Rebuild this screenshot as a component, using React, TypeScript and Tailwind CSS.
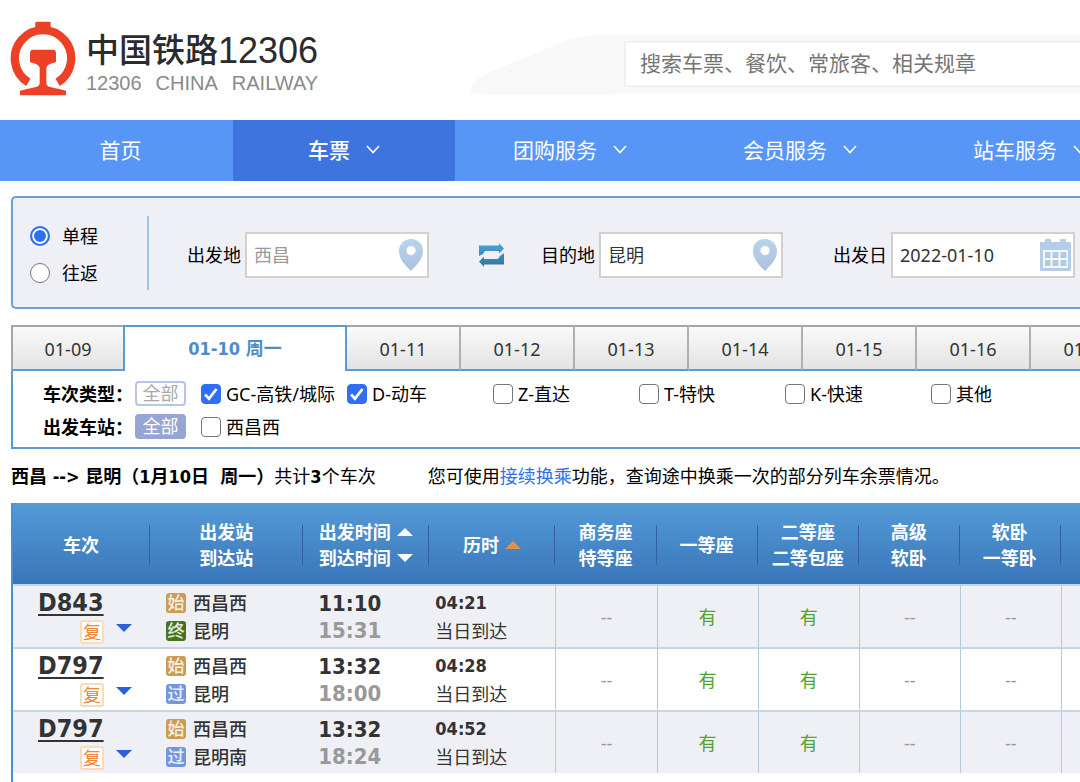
import { useState } from 'react';

const navItems = ['团购服务', '会员服务', '站车服务'];
const dates = ['01-11', '01-12', '01-13', '01-14', '01-15', '01-16', '01-17'];
const trainTypes = [
  { label: 'GC-高铁/城际', checked: true },
  { label: 'D-动车', checked: true },
  { label: 'Z-直达', checked: false },
  { label: 'T-特快', checked: false },
  { label: 'K-快速', checked: false },
  { label: '其他', checked: false },
];
const trains = [
  { no: 'D843', from: '西昌西', to: '昆明', endKind: '终', depart: '11:10', arrive: '15:31', duration: '04:21' },
  { no: 'D797', from: '西昌西', to: '昆明', endKind: '过', depart: '13:32', arrive: '18:00', duration: '04:28' },
  { no: 'D797', from: '西昌西', to: '昆明南', endKind: '过', depart: '13:32', arrive: '18:24', duration: '04:52' },
];
const seats = ['--', '有', '有', '--', '--', ''];
const seatHeads = [['商务座', '特等座'], ['一等座'], ['二等座', '二等包座'], ['高级', '软卧'], ['软卧', '一等卧'], []];

function Logo() {
  return (
    <svg viewBox="30 62 198 225" className="h-[75px] w-[66px] shrink-0" aria-hidden="true">
      <path d="M85 246A84.5 84.5 0 1 1 173 246" fill="none" stroke="#ec4126" strokeWidth="25" />
      <path d="M106 84V68q0-4 4-4h38q4 0 4 4v16z" fill="#ec4126" />
      <path
        d="M90 158q0-10 10-10h58q10 0 10 10v26q-1 2-6 3-23 5-23 17v44q0 9 12 12 10 3 24 5l23 6v14H60v-14l23-6q14-2 24-5 12-3 12-12v-44q0-12-23-17-5-1-6-3z"
        fill="#ec4126"
      />
    </svg>
  );
}

function Chevron() {
  return (
    <svg viewBox="0 0 14 9" className="h-[9px] w-[14px]" aria-hidden="true">
      <path d="M1 1l6 6.5L13 1" fill="none" stroke="#fff" strokeWidth="1.6" />
    </svg>
  );
}

function Pin() {
  return (
    <svg viewBox="0 0 24 32" className="mr-0.5 h-8 w-6 shrink-0" aria-hidden="true">
      <defs>
        <linearGradient id="pin" x1="0" y1="0" x2="0" y2="1">
          <stop offset="0" stopColor="#b9d4ec" />
          <stop offset="1" stopColor="#abc1dc" />
        </linearGradient>
      </defs>
      <path
        fill="url(#pin)"
        fillRule="evenodd"
        d="M12 0C5 0 0 5 0 12c0 8 6 14 12 20 6-6 12-12 12-20C24 5 19 0 12 0zm0 7a4.6 4.6 0 1 1 0 9.200a4.600 4.600 0 0 1 0-9.200z"
      />
    </svg>
  );
}

function CalendarIcon() {
  return (
    <svg viewBox="0 0 31 32" className="h-8 w-[31px] shrink-0" aria-hidden="true">
      <path fill="#b4cee8" d="M0 3h5V1q0-1 1-1h4q1 0 1 1v2h9V1q0-1 1-1h4q1 0 1 1v2h5v28q0 1-1 1H1q-1 0-1-1z" />
      <path fill="#f4f8fc" d="M3 11h25v18H3z" />
      <path
        fill="#b4cae2"
        d="M5 13h5.500v6H5zM12.500 13h6v6h-6zM20.500 13h6v6h-6zM5 21h5.500v6H5zM12.500 21h6v6h-6zM20.500 21h6v6h-6z"
      />
    </svg>
  );
}

function SwapIcon() {
  return (
    <svg viewBox="0 0 25 24" className="h-6 w-[25px]" aria-hidden="true">
      <defs>
        <linearGradient id="swap" x1="0" y1="0" x2="0" y2="1">
          <stop offset="0" stopColor="#4aa5d3" />
          <stop offset="1" stopColor="#33739f" />
        </linearGradient>
      </defs>
      <path
        fill="url(#swap)"
        d="M0 13V2.500h20V0l5 5.500-5 5V8H6L4 11zM25 10v11.500H5V24l-5-5.500 5-5V16h14l2-3z"
      />
    </svg>
  );
}

function Triangle({ down, className }: { down?: boolean; className: string }) {
  return (
    <svg viewBox="0 0 16 8" className={`h-2 w-4 ${className}`} aria-hidden="true">
      <path d={down ? 'M0 0h16L8 8z' : 'M0 8h16L8 0z'} fill="currentColor" />
    </svg>
  );
}

function CheckBox({ label, initial }: { label: string; initial?: boolean }) {
  const [on, setOn] = useState(!!initial);
  return (
    <label className="flex items-center gap-[5px] whitespace-nowrap">
      <span className="grid">
        <input
          type="checkbox"
          checked={on}
          onChange={() => setOn(!on)}
          className="col-start-1 row-start-1 size-5 appearance-none rounded-[4px] border border-[#767676] bg-white checked:border-[#2f6ff5] checked:bg-[#2f6ff5]"
        />
        {on && (
          <svg viewBox="0 0 20 20" className="pointer-events-none col-start-1 row-start-1 size-5" aria-hidden="true">
            <path d="M4 10.500l4 4.200L15.500 5" fill="none" stroke="#fff" strokeWidth="2.700" />
          </svg>
        )}
      </span>
      {label}
    </label>
  );
}

function Field({ id, label, value, muted, icon }: { id: string; label: string; value: string; muted?: boolean; icon: React.ReactNode }) {
  return (
    <div className="flex shrink-0 items-center gap-1">
      <label htmlFor={id}>{label}</label>
      <div className="flex h-[46px] w-[184px] items-center border-2 border-[#d2d0cd] bg-white pr-0.5">
        <input
          id={id}
          defaultValue={value}
          className={`min-w-0 flex-1 bg-transparent pl-[7px] outline-none ${muted ? 'text-[#999]' : 'text-[#333]'}`}
        />
        {icon}
      </div>
    </div>
  );
}

function KindBadge({ kind }: { kind: string }) {
  const color = kind === '始' ? 'bg-[#cb9c52]' : kind === '终' ? 'bg-[#48731d]' : 'bg-[#7496dc]';
  return (
    <span className={`flex size-5 items-center justify-center rounded-[3px] text-[17px] font-medium leading-5 text-white/85 ${color}`}>
      {kind}
    </span>
  );
}

const bold = "font-bold font-['DejaVu_Sans_Condensed','Noto_Sans','Noto_Sans_CJK_SC',sans-serif]";

export default function App() {
  const [trip, setTrip] = useState('single');
  return (
    <div className="min-h-screen overflow-hidden bg-white font-['Noto_Sans','Noto_Sans_CJK_SC',sans-serif] text-[18px] leading-[26px] text-black">
      <header className="flex h-[120px]">
        <div className="flex w-[471px] shrink-0 items-start gap-2.5 pl-2.5 pt-[21px]">
          <Logo />
          <div className="pt-2.5 text-[#2b2b2b]">
            <h1 className="flex items-center font-['Liberation_Sans','Noto_Sans_CJK_SC',sans-serif] leading-10">
              <span className="text-[33px] font-medium">中国铁路</span>
              <span className="text-[36px]">12306</span>
            </h1>
            <p className="flex justify-between font-['Liberation_Sans',sans-serif] text-[20px] leading-6 text-[#8a8a8a]">
              <span>12306</span>
              <span>CHINA</span>
              <span>RAILWAY</span>
            </p>
          </div>
        </div>
        <div className="flex flex-1 pt-[34px]">
          <svg viewBox="0 0 140 61" className="h-[61px] w-[140px] shrink-0" aria-hidden="true">
            <path d="M0 60v-6q2-7 12-13L71 17Q105 0 140 0v61H40z" fill="#f8f8f8" />
          </svg>
          <div className="flex h-[60px] flex-1 items-center bg-[#f8f8f8] pl-[13px]">
            <input
              aria-label="搜索"
              placeholder="搜索车票、餐饮、常旅客、相关规章"
              className="h-[46px] w-full border-2 border-r-0 border-[#f0f0f0] bg-white pb-0.5 pl-[14px] text-[21px] outline-none placeholder:text-[#757575]"
            />
          </div>
        </div>
      </header>

      <nav className="flex h-[61px] bg-[#5796f7] text-[21px] text-white">
        <a href="#home" className="flex w-[233px] shrink-0 items-center justify-center pb-0.5 pl-2">首页</a>
        <a href="#ticket" className="flex w-[222px] shrink-0 items-center justify-center gap-4 bg-[#3e74dd] pb-0.5 font-medium">
          车票
          <Chevron />
        </a>
        {navItems.map((n) => (
          <a key={n} href="#service" className="flex w-[230px] shrink-0 items-center justify-center gap-4 pb-0.5">
            {n}
            <Chevron />
          </a>
        ))}
      </nav>

      <main className="pl-[11px] pt-[15px]">
        <form className="flex h-[113px] items-center rounded-l-[5px] border-2 border-r-0 border-[#68a2d6] bg-[#eff0f6] pl-[17px] pt-1">
          <div className="flex w-[117px] shrink-0 flex-col gap-[11px]">
            {[['single', '单程'], ['round', '往返']].map(([v, l]) => (
              <label key={v} className="flex items-center gap-3">
                <input
                  type="radio"
                  name="trip"
                  checked={trip === v}
                  onChange={() => setTrip(v)}
                  className="size-5 appearance-none rounded-full border border-[#767676] bg-white checked:border-2 checked:border-[#2f6ff5] checked:bg-[#2f6ff5] checked:shadow-[inset_0_0_0_2px_#fff]"
                />
                {l}
              </label>
            ))}
          </div>
          <div className="mb-1 h-[74px] w-10 shrink-0 border-l-2 border-[#9cc6e4]" />
          <Field id="from" label="出发地" value="西昌" muted icon={<Pin />} />
          <button type="button" aria-label="交换" className="flex w-[112px] shrink-0 items-center justify-center pl-3">
            <SwapIcon />
          </button>
          <Field id="to" label="目的地" value="昆明" icon={<Pin />} />
          <div className="w-[50px] shrink-0" />
          <Field id="date" label="出发日" value="2022-01-10" icon={<CalendarIcon />} />
        </form>

        <div className="mt-4 flex h-[46px] text-[#333]">
          <button type="button" className="w-[112px] shrink-0 border-2 border-r-0 border-b-[#5a9bd3] border-l-[#a6a6a6] border-t-[#a6a6a6] bg-linear-to-b from-[#fafafa] to-[#e3e3e3] pt-0.5">01-09</button>
          <button type="button" className={`w-[224px] shrink-0 border-2 border-b-0 border-[#5a9bd3] bg-white text-[#4b8dcb] ${bold}`}>01-10 周一</button>
          {dates.map((d) => (
            <button key={d} type="button" className="w-[114px] shrink-0 border-y-2 border-r-2 border-b-[#5a9bd3] border-r-[#b0b0b0] border-t-[#a6a6a6] bg-linear-to-b from-[#fafafa] to-[#e3e3e3] pt-0.5">
              {d}
            </button>
          ))}
        </div>

        <section className="flex h-[78px] flex-col gap-2 border-b-2 border-l-2 border-[#5a9bd3] pl-[30px] pt-[10px]">
          <div className="flex h-[25px] items-center">
            <span className="w-[92px] shrink-0 whitespace-nowrap font-bold">车次类型：</span>
            <button type="button" className="h-[25px] w-[51px] shrink-0 rounded-[4px] border-2 border-[#b9c5e6] bg-white leading-[21px] text-[#a9a9a9]">全部</button>
            <div className="ml-[15px] flex">
              {trainTypes.map((t) => (
                <div key={t.label} className="w-[146px] shrink-0">
                  <CheckBox label={t.label} initial={t.checked} />
                </div>
              ))}
            </div>
          </div>
          <div className="flex h-[25px] items-center">
            <span className="w-[92px] shrink-0 whitespace-nowrap font-bold">出发车站：</span>
            <button type="button" className="mr-[15px] h-[25px] w-[51px] shrink-0 rounded-[4px] bg-[#95a5d4] leading-[25px] text-white">全部</button>
            <CheckBox label="西昌西" />
          </div>
        </section>

        <div className="flex h-[54px] items-center gap-[52px] whitespace-nowrap">
          <p>
            <strong className={bold}>西昌 --&gt; 昆明（1月10日&nbsp; 周一）</strong>共计<strong className={bold}>3</strong>个车次
          </p>
          <p>
            您可使用<a href="#transfer" className="text-[#2f6ff5]">接续换乘</a>功能，查询途中换乘一次的部分列车余票情况。
          </p>
        </div>

        <div className="min-h-[279px] overflow-hidden border-l-2 border-[#4a90d0]">
          <table className="w-[1149px] table-fixed border-separate border-spacing-0">
            <colgroup>
              <col className="w-[137px]" />
              <col className="w-[153px]" />
              <col className="w-[126px]" />
              <col className="w-[126px]" />
              {seatHeads.map((h, i) => (
                <col key={i} className="w-[101px]" />
              ))}
            </colgroup>
            <thead>
              <tr className="h-[81px] bg-linear-to-b from-[#549bd7] to-[#3975b9] text-white">
                <th className="p-0 pt-0.5 font-bold"><Head lines={['车次']} /></th>
                <th className="p-0 pt-0.5 font-bold"><Head lines={['出发站', '到达站']} /></th>
                <th className="p-0 pt-0.5 font-bold">
                  <div className="flex h-10 items-center justify-center border-r border-[#35609f]">
                    <div>
                      <div className="flex items-center gap-1.5">出发时间<Triangle className="text-white" /></div>
                      <div className="flex items-center gap-1.5">到达时间<Triangle down className="text-white" /></div>
                    </div>
                  </div>
                </th>
                <th className="p-0 pt-0.5 font-bold">
                  <div className="flex h-10 items-center justify-center gap-1.5 border-r border-[#35609f]">
                    历时<Triangle className="text-[#e2904a]" />
                  </div>
                </th>
                {seatHeads.map((h, i) => (
                  <th key={i} className="p-0 pt-0.5 font-bold"><Head lines={h} /></th>
                ))}
              </tr>
            </thead>
            <tbody className="text-[#333]">
              {trains.map((t, i) => (
                <tr key={i} className="h-[63px] odd:bg-[#eff0f6] even:bg-white">
                  <td className="border-t-2 border-[#c3d7e4] p-0 align-top">
                    <div className="flex flex-col pl-[25px]">
                      <a href="#train" className={`self-start text-[25px] leading-[34px] underline decoration-2 underline-offset-[3px] ${bold}`}>{t.no}</a>
                      <div className="flex items-start gap-3 pl-[42px]">
                        <span className="flex size-6 items-center justify-center rounded-[3px] border-2 border-[#fbdcb4] bg-white text-[18px] leading-5 text-[#f08437]">复</span>
                        <button type="button" aria-label="展开" className="pt-1"><Triangle down className="text-[#2b62dc]" /></button>
                      </div>
                    </div>
                  </td>
                  <td className="border-t-2 border-[#c3d7e4] p-0 pl-4 font-medium">
                    <div className="flex h-7 items-center gap-[7px]"><KindBadge kind="始" />{t.from}</div>
                    <div className="flex h-7 items-center gap-[7px]"><KindBadge kind={t.endKind} />{t.to}</div>
                  </td>
                  <td className={`border-t-2 border-[#c3d7e4] p-0 pl-[15px] text-[22px] leading-[27px] ${bold}`}>
                    <div>{t.depart}</div>
                    <div className="text-[#999]">{t.arrive}</div>
                  </td>
                  <td className="border-t-2 border-[#c3d7e4] p-0 pl-1.5 leading-7">
                    <div className={bold}>{t.duration}</div>
                    <div>当日到达</div>
                  </td>
                  {seats.map((s, k) => (
                    <td key={k} className={`border-l border-t-2 border-l-[#b0cbdc] border-t-[#c3d7e4] p-0 text-center ${s === '有' ? 'text-[#4fa52f]' : 'text-[#999]'}`}>{s}</td>
                  ))}
                </tr>
              ))}
            </tbody>
          </table>
        </div>
      </main>
    </div>
  );
}

function Head({ lines }: { lines: string[] }) {
  return (
    <div className="flex h-10 flex-col justify-center border-r border-[#35609f]">
      {lines.map((l) => (
        <div key={l}>{l}</div>
      ))}
    </div>
  );
}
